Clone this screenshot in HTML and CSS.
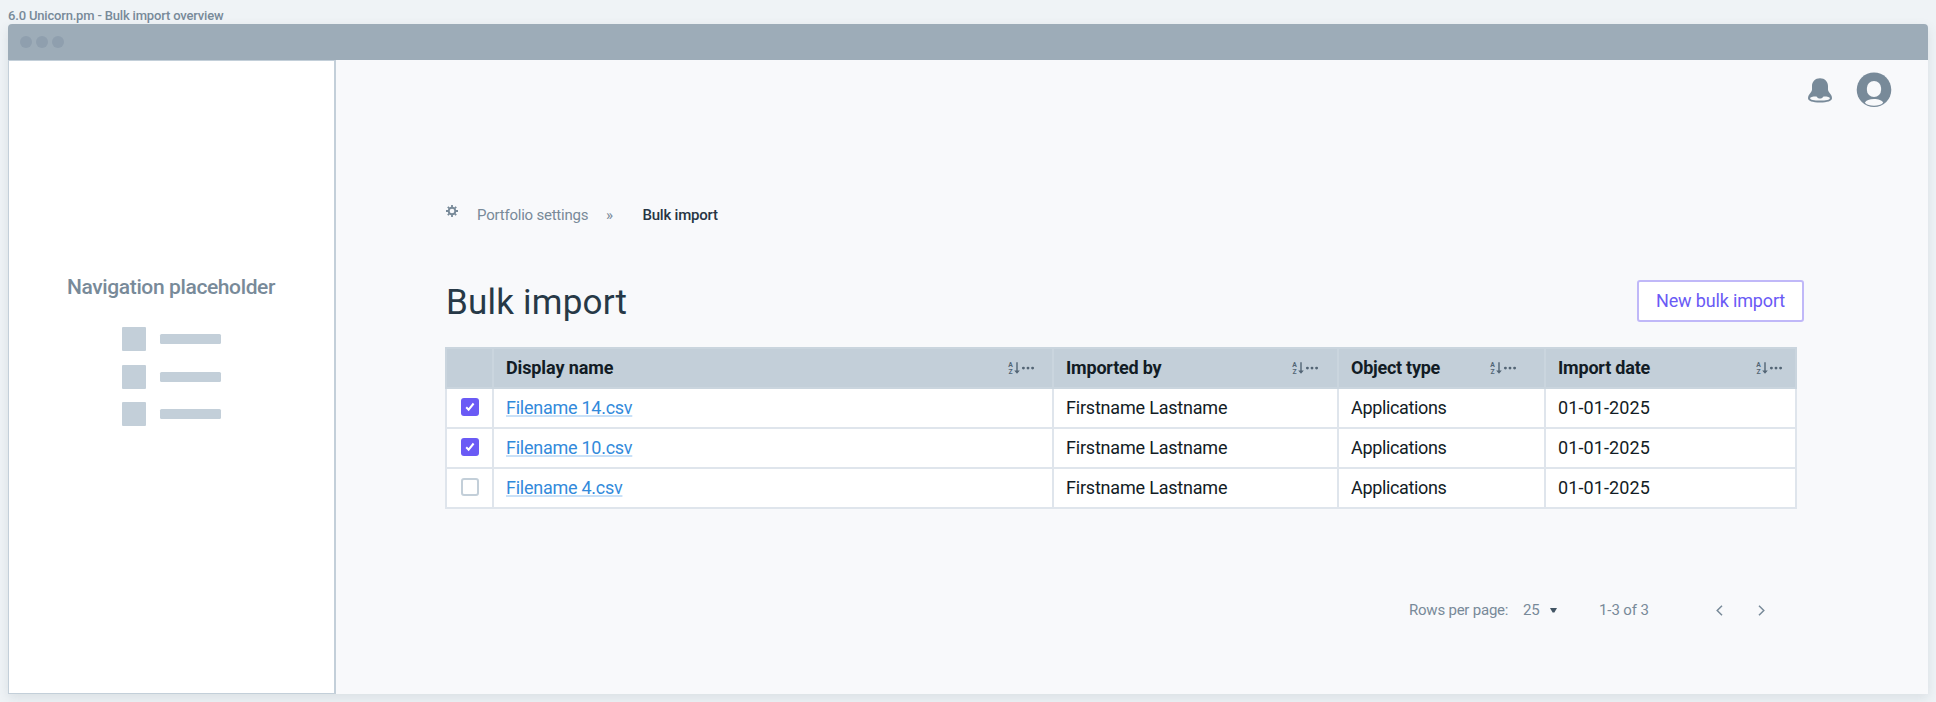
FILE: index.html
```html
<!DOCTYPE html>
<html lang="en">
<head>
<meta charset="utf-8">
<title>Bulk import overview</title>
<link rel="stylesheet" href="styles.css">
</head>
<body>
<div class="frame-label">6.0 Unicorn.pm - Bulk import overview</div>
<div class="window">
  <div class="titlebar"><i></i><i></i><i></i></div>
  <div class="body">
    <aside class="nav">
      <div class="nav-title">Navigation placeholder</div>
      <div class="nav-list">
        <div class="nav-item"><b></b><i></i></div>
        <div class="nav-item"><b></b><i></i></div>
        <div class="nav-item"><b></b><i></i></div>
      </div>
    </aside>
    <main class="main">
      <div class="topbar">
        <svg class="bell" width="24" height="25" viewBox="0 0 24 25">
          <path fill="currentColor" d="M12 0.2C7.2 0.2 4 3.6 4 8v3.600C4 14.800 0 16 0 20.200C0 23 4.500 24.400 12 24.400S24 23 24 20.200C24 16 20 14.800 20 11.600V8C20 3.600 16.800 0.200 12 0.200z"/>
          <path fill="#f8f9fb" d="M2.100 20.200C2.100 18.900 4.500 18.400 8 18.400C9.200 18.400 9.400 20.600 12 20.600S14.800 18.400 16 18.400C19.500 18.400 21.900 18.900 21.900 20.200C21.900 21.700 18 22.500 12 22.500S2.100 21.700 2.100 20.200z"/>
        </svg>
        <svg class="avatar" width="36" height="36" viewBox="-0.5 0 36 36">
          <circle cx="17.500" cy="17.800" r="17.300" fill="currentColor"/>
          <rect x="10.400" y="9" width="14.200" height="16" rx="7.100" fill="#f8f9fb"/>
          <path fill="#f8f9fb" d="M8.300 30.700C9.500 28.200 13 27 17.500 27S25.500 28.200 26.700 30.700C24.500 32.900 21.500 33.700 17.500 33.700S10.500 32.900 8.300 30.700z"/>
        </svg>
      </div>
      <nav class="crumbs">
        <svg class="gear" width="12" height="12" viewBox="0 0 12 12">
          <circle cx="6" cy="6" r="3.300" fill="none" stroke="currentColor" stroke-width="1.900"/>
          <path stroke="currentColor" stroke-width="1.800" d="M6 0v2.200M6 9.800V12M0 6h2.200M9.800 6H12M1.800 1.800l1.500 1.500M8.700 8.700l1.500 1.500M1.800 10.200l1.500-1.500M8.700 3.300l1.500-1.500"/>
        </svg>
        <span class="crumb">Portfolio settings</span>
        <span class="sep">»</span>
        <span class="crumb current">Bulk import</span>
      </nav>
      <header class="head">
        <h1>Bulk import</h1>
        <button class="new">New bulk import</button>
      </header>
      <div class="table">
        <div class="row thead">
          <div></div>
          <div class="c1">Display name<svg class="sort" viewBox="0 0 27 16"><text x="0.2" y="6.800">A</text><text x="0.500" y="13.600">Z</text><path d="M8.300 2.200h1.400v8.200h2.100L9 13.800L6.200 10.400h2.100z"/><circle cx="15.400" cy="8.100" r="1.450"/><circle cx="20" cy="8.100" r="1.450"/><circle cx="24.600" cy="8.100" r="1.450"/></svg></div>
          <div class="c2">Imported by<svg class="sort" viewBox="0 0 27 16"><text x="0.2" y="6.800">A</text><text x="0.500" y="13.600">Z</text><path d="M8.300 2.200h1.400v8.200h2.100L9 13.800L6.200 10.400h2.100z"/><circle cx="15.400" cy="8.100" r="1.450"/><circle cx="20" cy="8.100" r="1.450"/><circle cx="24.600" cy="8.100" r="1.450"/></svg></div>
          <div class="c3">Object type<svg class="sort" viewBox="0 0 27 16"><text x="0.2" y="6.800">A</text><text x="0.500" y="13.600">Z</text><path d="M8.300 2.200h1.400v8.200h2.100L9 13.800L6.200 10.400h2.100z"/><circle cx="15.400" cy="8.100" r="1.450"/><circle cx="20" cy="8.100" r="1.450"/><circle cx="24.600" cy="8.100" r="1.450"/></svg></div>
          <div class="c4">Import date<svg class="sort" viewBox="0 0 27 16"><text x="0.2" y="6.800">A</text><text x="0.500" y="13.600">Z</text><path d="M8.300 2.200h1.400v8.200h2.100L9 13.800L6.200 10.400h2.100z"/><circle cx="15.400" cy="8.100" r="1.450"/><circle cx="20" cy="8.100" r="1.450"/><circle cx="24.600" cy="8.100" r="1.450"/></svg></div>
        </div>
        <div class="row">
          <div class="pick"><span class="box on"><svg width="10" height="10" viewBox="0 0 10 10"><path d="M1.200 5.300L3.600 7.700L8.600 1.500"/></svg></span></div>
          <div><a>Filename 14.csv</a></div><div>Firstname Lastname</div><div class="apps">Applications</div><div class="date">01-01-2025</div>
        </div>
        <div class="row">
          <div class="pick"><span class="box on"><svg width="10" height="10" viewBox="0 0 10 10"><path d="M1.200 5.300L3.600 7.700L8.600 1.500"/></svg></span></div>
          <div><a>Filename 10.csv</a></div><div>Firstname Lastname</div><div class="apps">Applications</div><div class="date">01-01-2025</div>
        </div>
        <div class="row">
          <div class="pick"><span class="box"></span></div>
          <div><a>Filename 4.csv</a></div><div>Firstname Lastname</div><div class="apps">Applications</div><div class="date">01-01-2025</div>
        </div>
      </div>
      <footer class="pager">
        <span class="rows">Rows per page:</span>
        <span class="size">25</span>
        <svg class="caret" width="7" height="5" viewBox="0 0 7 5"><path fill="currentColor" d="M0 0h7L4.400 4.500H2.600z"/></svg>
        <span class="range">1-3 of 3</span>
        <svg class="prev" width="7" height="11" viewBox="0 0 7 11"><path d="M6 0.700L1.200 5.500L6 10.300"/></svg>
        <svg class="next" width="7" height="11" viewBox="0 0 7 11"><path d="M1 0.700L5.800 5.500L1 10.300"/></svg>
      </footer>
    </main>
  </div>
</div>
</body>
</html>
```
FILE: styles.css
```css
* { box-sizing: border-box; }

body {
  margin: 0;
  padding: 0 8px;
  height: 702px;
  overflow: hidden;
  background: #eff3f6;
  font-family: Roboto, "Liberation Sans", sans-serif;
  font-size: 18px;
  color: #121c25;
}

.frame-label {
  height: 24px;
  padding-top: 6px;
  line-height: 19px;
  font-size: 13px;
  font-weight: 500;
  letter-spacing: -0.18px;
  color: #788a99;
}

.window {
  width: 1920px;
  height: 670px;
  display: flex;
  flex-direction: column;
  border-radius: 4px 4px 0 0;
  box-shadow: 0 4px 12px rgba(60, 85, 100, 0.12);
}

.titlebar {
  flex: 0 0 36px;
  display: flex;
  align-items: center;
  gap: 4px;
  padding-left: 12px;
  background: #9dacb8;
  border-radius: 4px 4px 0 0;
}

.titlebar i {
  width: 12px;
  height: 12px;
  border-radius: 50%;
  background: #8f9fae;
}

.body { flex: 1; display: flex; }

.nav {
  width: 328px;
  padding-top: 213px;
  background: #fff;
  border: 1px solid #c3cfd9;
  border-right-width: 2px;
}

.nav-title {
  padding-right: 1px;
  text-align: center;
  font-size: 21px;
  line-height: 26px;
  font-weight: 500;
  letter-spacing: -0.38px;
  color: #788a99;
}

.nav-list {
  display: grid;
  gap: 13.5px;
  padding: 27px 0 0 113px;
}

.nav-item { display: flex; align-items: center; gap: 13.5px; }
.nav-item b { width: 24px; height: 24px; border-radius: 1px; background: #c3cfd9; }
.nav-item i { width: 61.5px; height: 10px; border-radius: 1.5px; background: #c3cfd9; }

.main {
  flex: 1;
  padding: 12px 124px 0 109px;
  background: #f8f9fb;
}

.topbar {
  display: flex;
  justify-content: flex-end;
  gap: 24px;
  height: 36px;
  margin-right: -88px;
  color: #788a99;
}

.bell { margin-top: 6px; }

.crumbs {
  display: flex;
  height: 24px;
  margin-top: 95px;
  line-height: 24px;
  font-size: 15px;
  letter-spacing: -0.22px;
  color: #788a99;
}

.gear { margin: 2px 19px 0 1px; }
.crumb { width: 129px; }
.sep { width: 36.5px; }
.current { font-weight: 500; color: #273543; }

.head {
  display: flex;
  justify-content: space-between;
  margin-top: 53px;
}

h1 {
  margin: 0;
  padding-left: 1px;
  font-size: 35px;
  line-height: 46px;
  font-weight: 400;
  letter-spacing: 0.2px;
  color: #273947;
}

.new {
  width: 167px;
  height: 42px;
  margin: 0;
  padding: 0;
  border: 2px solid #c0b8f8;
  border-radius: 3px;
  background: #fff;
  font: 400 18px/38px Roboto, "Liberation Sans", sans-serif;
  letter-spacing: -0.15px;
  color: #6a5af5;
}

.table { width: 1352px; margin-top: 21px; }

.row {
  display: grid;
  grid-template-columns: 45px 558px 283px 205px 249px;
  gap: 2px;
  padding: 0 2px 2px;
  background: #dfe5ec;
}

.row > div {
  height: 38px;
  padding-left: 12px;
  line-height: 38px;
  background: #fff;
  letter-spacing: -0.2px;
}

.row > .apps { letter-spacing: -0.35px; }
.row > .date { letter-spacing: 0.1px; }

.thead { padding-top: 2px; background: #cad5de; }

.thead > div {
  display: flex;
  justify-content: space-between;
  align-items: center;
  background: #c3cfd9;
  font-weight: 700;
}

.thead .c1 { padding-right: 17px; letter-spacing: -0.12px; }
.thead .c2 { padding-right: 18px; }
.thead .c3 { padding-right: 27px; letter-spacing: -0.26px; }
.thead .c4 { padding-right: 12px; }

.sort {
  width: 27px;
  height: 16px;
  overflow: visible;
  fill: #536575;
  font: 700 6.8px Roboto, sans-serif;
  letter-spacing: 0;
}

.row > .pick {
  padding: 0;
  display: flex;
  justify-content: center;
  align-items: center;
}

.box {
  width: 18px;
  height: 18px;
  margin: 0 0 2px 1px;
  border: 2px solid #c3cfd9;
  border-radius: 3px;
  background: #fff;
}

.box.on {
  display: flex;
  justify-content: center;
  align-items: center;
  border: 0;
  background: #6a5af5;
}

.box path { fill: none; stroke: #fff; stroke-width: 2; }

a {
  color: #328adb;
  letter-spacing: -0.26px;
  text-decoration: underline;
  text-decoration-color: #c9e1f8;
  text-decoration-thickness: 2px;
  text-decoration-skip-ink: none;
  text-underline-offset: 1px;
}

.pager {
  display: flex;
  align-items: center;
  height: 24px;
  margin-top: 89px;
  padding-left: 964px;
  font-size: 15px;
  letter-spacing: -0.22px;
  color: #788a99;
}

.rows { width: 114px; }
.size { width: 26.5px; }
.caret { color: #425564; margin-right: 42.5px; }
.range { width: 117px; letter-spacing: -0.1px; }
.prev { margin-right: 35px; }
.prev path, .next path { fill: none; stroke: currentColor; stroke-width: 1.5; }
```
